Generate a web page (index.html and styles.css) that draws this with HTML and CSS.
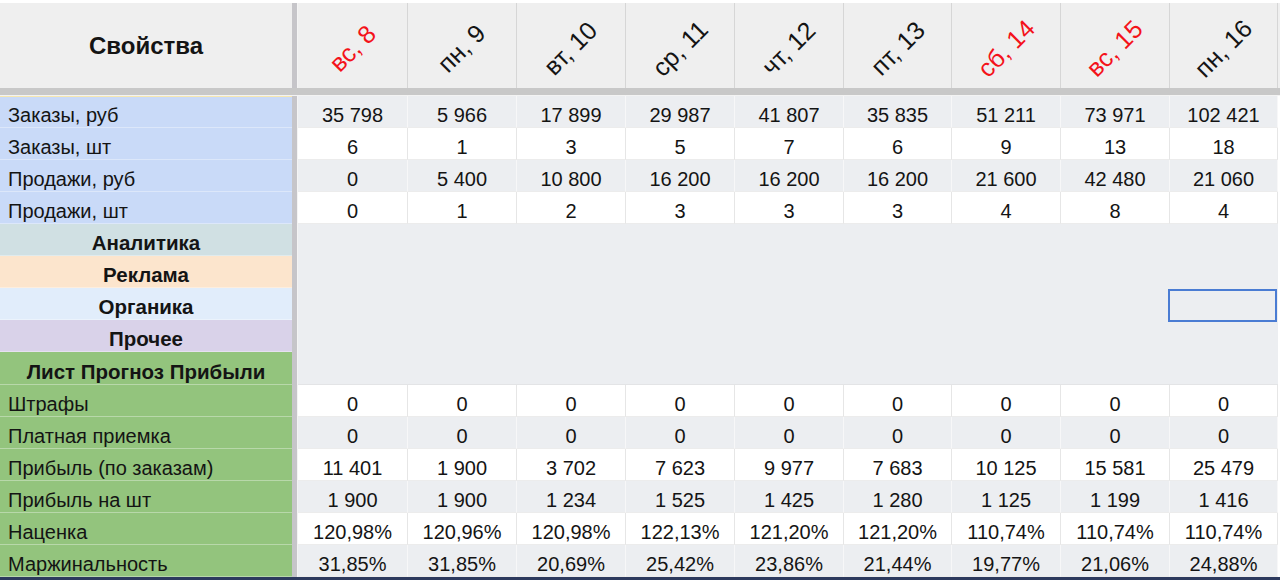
FILE: index.html
```html
<!DOCTYPE html>
<html lang="ru">
<head>
<meta charset="utf-8">
<title>Свойства</title>
<link rel="stylesheet" href="styles.css">
</head>
<body>
<div class="sheet">
  <div class="head">
    <div class="prop-head">Свойства</div>
    <div class="vdiv"></div>
    <div class="dates">
      <div class="date red"><span>вс, 8</span></div>
      <div class="date"><span>пн, 9</span></div>
      <div class="date"><span>вт, 10</span></div>
      <div class="date"><span>ср, 11</span></div>
      <div class="date"><span>чт, 12</span></div>
      <div class="date"><span>пт, 13</span></div>
      <div class="date red"><span>сб, 14</span></div>
      <div class="date red"><span>вс, 15</span></div>
      <div class="date"><span>пн, 16</span></div>
    </div>
  </div>
  <div class="hband"></div>
  <div class="body">
    <div class="labels">
      <div class="lab blue first">Заказы, руб</div>
      <div class="lab blue">Заказы, шт</div>
      <div class="lab blue">Продажи, руб</div>
      <div class="lab blue">Продажи, шт</div>
      <div class="lab sec cyan">Аналитика</div>
      <div class="lab sec orange">Реклама</div>
      <div class="lab sec sky">Органика</div>
      <div class="lab sec purple">Прочее</div>
      <div class="lab sec green">Лист Прогноз Прибыли</div>
      <div class="lab green">Штрафы</div>
      <div class="lab green">Платная приемка</div>
      <div class="lab green">Прибыль (по заказам)</div>
      <div class="lab green">Прибыль на шт</div>
      <div class="lab green">Наценка</div>
      <div class="lab green">Маржинальность</div>
    </div>
    <div class="vdiv"></div>
    <div class="grid">
      <div class="c g">35 798</div><div class="c g">5 966</div><div class="c g">17 899</div><div class="c g">29 987</div><div class="c g">41 807</div><div class="c g">35 835</div><div class="c g">51 211</div><div class="c g">73 971</div><div class="c g">102 421</div>
      <div class="c">6</div><div class="c">1</div><div class="c">3</div><div class="c">5</div><div class="c">7</div><div class="c">6</div><div class="c">9</div><div class="c">13</div><div class="c">18</div>
      <div class="c g">0</div><div class="c g">5 400</div><div class="c g">10 800</div><div class="c g">16 200</div><div class="c g">16 200</div><div class="c g">16 200</div><div class="c g">21 600</div><div class="c g">42 480</div><div class="c g">21 060</div>
      <div class="c">0</div><div class="c">1</div><div class="c">2</div><div class="c">3</div><div class="c">3</div><div class="c">3</div><div class="c">4</div><div class="c">8</div><div class="c">4</div>
      <div class="merged">
        <div class="selected"></div>
      </div>
      <div class="c">0</div><div class="c">0</div><div class="c">0</div><div class="c">0</div><div class="c">0</div><div class="c">0</div><div class="c">0</div><div class="c">0</div><div class="c">0</div>
      <div class="c g">0</div><div class="c g">0</div><div class="c g">0</div><div class="c g">0</div><div class="c g">0</div><div class="c g">0</div><div class="c g">0</div><div class="c g">0</div><div class="c g">0</div>
      <div class="c">11 401</div><div class="c">1 900</div><div class="c">3 702</div><div class="c">7 623</div><div class="c">9 977</div><div class="c">7 683</div><div class="c">10 125</div><div class="c">15 581</div><div class="c">25 479</div>
      <div class="c g">1 900</div><div class="c g">1 900</div><div class="c g">1 234</div><div class="c g">1 525</div><div class="c g">1 425</div><div class="c g">1 280</div><div class="c g">1 125</div><div class="c g">1 199</div><div class="c g">1 416</div>
      <div class="c">120,98%</div><div class="c">120,96%</div><div class="c">120,98%</div><div class="c">122,13%</div><div class="c">121,20%</div><div class="c">121,20%</div><div class="c">110,74%</div><div class="c">110,74%</div><div class="c">110,74%</div>
      <div class="c g">31,85%</div><div class="c g">31,85%</div><div class="c g">20,69%</div><div class="c g">25,42%</div><div class="c g">23,86%</div><div class="c g">21,44%</div><div class="c g">19,77%</div><div class="c g">21,06%</div><div class="c g">24,88%</div>
    </div>
  </div>
  <div class="bottom"></div>
</div>
</body>
</html>
```

FILE: styles.css
```css
* { box-sizing: border-box; }
html, body { margin: 0; padding: 0; background: #ffffff; }
body {
  font-family: "Liberation Sans", Arial, "Helvetica Neue", sans-serif;
  color: #141414;
  overflow: hidden;
}
.sheet {
  width: 1280px;
  height: 581px;
  padding-top: 3px;
  display: flex;
  flex-direction: column;
}
.head {
  display: flex;
  height: 85px;
  background: #efefef;
}
.prop-head {
  width: 292px;
  flex: none;
  display: flex;
  align-items: center;
  justify-content: center;
  font-weight: bold;
  font-size: 24px;
  padding-top: 1px;
}
.vdiv {
  width: 6px;
  flex: none;
  background: #c6c5c9;
  border-right: 1px solid #f4f4f4;
}
.dates {
  flex: 1;
  display: grid;
  grid-template-columns: 110px 109px 109px 109px 109px 108px 109px 109px 108px;
}
.date {
  border-right: 1px solid #d6d6d6;
  display: flex;
  align-items: center;
  justify-content: center;
  font-size: 25px;
  overflow: hidden;
}
.date span {
  display: block;
  transform: rotate(-45deg);
  white-space: nowrap;
  margin-top: 6px;
}
.date.red { color: #f4121a; }
.hband {
  height: 8px;
  flex: none;
  background: #c8c8c8;
  border-bottom: 1px solid #f3f3f3;
}
.body {
  display: flex;
  flex: none;
}
.labels {
  width: 292px;
  flex: none;
  display: grid;
  grid-template-rows: repeat(8, 32px) 33px repeat(6, 32px);
}
.lab {
  display: flex;
  align-items: center;
  padding-left: 8px;
  padding-top: 7px;
  font-size: 20px;
  border-bottom: 1px solid rgba(255, 255, 255, 0.35);
  white-space: nowrap;
}
.lab.first { box-shadow: inset 0 1px 0 #f6e7b1; }
.lab.sec {
  justify-content: center;
  padding-left: 0;
  font-weight: bold;
  font-size: 20.5px;
}
.blue { background: #c9daf8; }
.cyan { background: #d0e0e3; }
.orange { background: #fce5cd; }
.sky { background: #e1edfb; }
.purple { background: #d9d2e9; }
.green { background: #93c47d; }
.grid {
  flex: 1;
  display: grid;
  grid-template-columns: 110px 109px 109px 109px 109px 108px 109px 109px 108px;
  grid-template-rows: repeat(8, 32px) 33px repeat(6, 32px);
  position: relative;
}
.c {
  display: flex;
  align-items: center;
  justify-content: center;
  padding-top: 7px;
  font-size: 20px;
  background: #ffffff;
  border-right: 1px solid #e6e6e6;
  border-bottom: 1px solid #ececec;
  white-space: nowrap;
}
.c.g {
  background: #eceef1;
  border-right-color: #f7f7f8;
}
.merged {
  grid-column: 1 / -1;
  grid-row: span 5;
  background: #eceef1;
  position: relative;
  border-bottom: 1px solid #e3e4e6;
}
.selected {
  position: absolute;
  right: 1px;
  top: 65px;
  width: 109px;
  height: 33px;
  border: 2px solid #4a7cd3;
}
.bottom {
  height: 3px;
  background: #2d3a5e;
  flex: none;
}
```
